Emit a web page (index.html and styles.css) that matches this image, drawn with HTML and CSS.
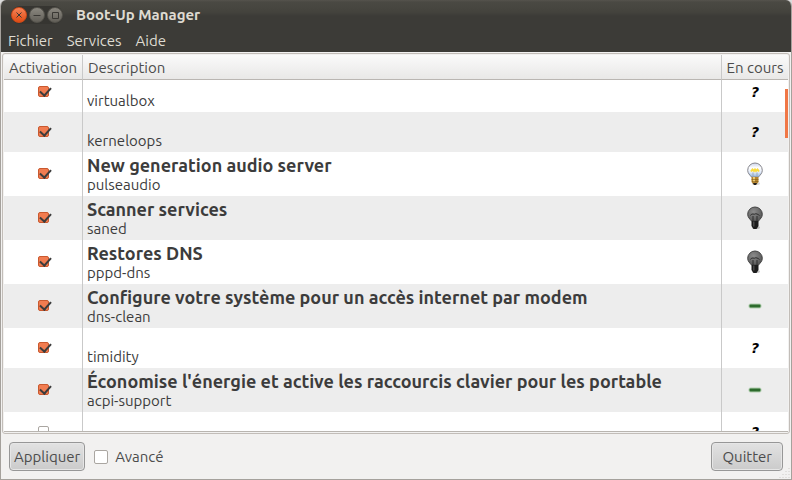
FILE: index.html
```html
<!DOCTYPE html>
<html lang="fr">
<head>
  <meta charset="UTF-8">
  <title>Boot-Up Manager</title>
  <link rel="stylesheet" href="styles.css">
</head>
<body>
  <svg class="defs" width="0" height="0">
    <defs>
      <linearGradient id="glass" x1="0" y1="0" x2="0" y2="1">
        <stop offset="0" stop-color="#c9d2ea"/>
        <stop offset="0.35" stop-color="#ffffff"/>
        <stop offset="0.65" stop-color="#e4ecfa"/>
        <stop offset="1" stop-color="#8db4dc"/>
      </linearGradient>
      <radialGradient id="dark" cx="40%" cy="35%" r="70%">
        <stop offset="0" stop-color="#8c8c8c"/>
        <stop offset="1" stop-color="#555"/>
      </radialGradient>
    </defs>
    <symbol id="bulb-on" viewBox="0 0 18 24">
      <ellipse cx="10" cy="21.5" rx="4" ry="1.5" fill="#000" opacity="0.15"/>
      <path d="M9 1a7.300 7.300 0 0 1 7.300 7.300c0 3-2 4.500-3.800 6.700h-7C3.700 12.800 1.700 11.300 1.700 8.300A7.300 7.300 0 0 1 9 1z" fill="url(#glass)" stroke="#85858c" stroke-width="1"/>
      <path d="M5 9.500l1.500-2 1.500 1.500 1-1.500 1 1.500 1.500-1.500 1.500 2" fill="none" stroke="#fadb3c" stroke-width="2"/>
      <path d="M7 10.500v4M11 10.500v4" stroke="#a0a9b8" stroke-width="1"/>
      <path d="M5.500 15h7v5l-2 2.500h-3l-2-2.500z" fill="#b5842c"/>
      <path d="M7 15h2v5H7z" fill="#ecca70"/>
      <path d="M5.500 17.500h7M6 19.500h6.500" stroke="#805a18" stroke-width="0.600"/>
      <path d="M7 21h4l-1 2H8z" fill="#222"/>
    </symbol>
    <symbol id="bulb-off" viewBox="0 0 18 24">
      <ellipse cx="10" cy="21.500" rx="4" ry="1.500" fill="#000" opacity="0.2"/>
      <path d="M9 1a7.300 7.300 0 0 1 7.300 7.300c0 3-2 4.500-3.800 6.700h-7C3.700 12.800 1.700 11.300 1.700 8.300A7.300 7.300 0 0 1 9 1z" fill="url(#dark)" stroke="#444" stroke-width="1"/>
      <path d="M4.500 9.500q1-2 2.500-1.500t2 0t2 0t2.500 1.500M7 10v5M11 10v5" fill="none" stroke="#2c2c2c" stroke-width="1"/>
      <path d="M5.500 15h7v5l-2 3h-3l-2-3z" fill="#1c1c1c"/>
      <path d="M7 15.500h1.500v5H7z" fill="#484848"/>
    </symbol>
    <symbol id="dash" viewBox="0 0 14 6">
      <rect x="0.500" y="0.500" width="13" height="5" rx="2" fill="#8fbf8c" opacity="0.6"/>
      <rect x="1.500" y="1.500" width="11" height="3" rx="1" fill="#2d6b2d"/>
    </symbol>
  </svg>

  <div class="window">
    <header class="titlebar">
      <div class="window-buttons">
        <button class="wbtn close" aria-label="Fermer">
          <svg viewBox="0 0 14 14"><path d="M4.500 4.500l5 5M9.500 4.500l-5 5"/></svg>
        </button>
        <button class="wbtn" aria-label="Réduire">
          <svg viewBox="0 0 14 14"><path d="M3.500 7.500h7"/></svg>
        </button>
        <button class="wbtn" aria-label="Agrandir">
          <svg viewBox="0 0 14 14"><path d="M4.500 4.500h6v6h-6z"/></svg>
        </button>
      </div>
      <h1>Boot-Up Manager</h1>
    </header>

    <nav class="menubar">
      <a href="#">Fichier</a>
      <a href="#">Services</a>
      <a href="#">Aide</a>
    </nav>

    <main class="content">
      <div class="frame">
        <div class="scroller" id="liste">
          <table>
            <thead>
              <tr><th class="col-active">Activation</th><th>Description</th><th class="col-status">En cours</th></tr>
            </thead>
            <tbody>
              <tr>
                <td><input type="checkbox" aria-label="virtualbox" checked></td>
                <td><div class="name">virtualbox</div></td>
                <td><span class="unknown">?</span></td>
              </tr>
              <tr>
                <td><input type="checkbox" aria-label="kerneloops" checked></td>
                <td><div class="name">kerneloops</div></td>
                <td><span class="unknown">?</span></td>
              </tr>
              <tr class="tall">
                <td><input type="checkbox" aria-label="pulseaudio" checked></td>
                <td><div class="title">New generation audio server</div><div class="name">pulseaudio</div></td>
                <td><svg class="bulb"><use href="#bulb-on"/></svg></td>
              </tr>
              <tr class="tall">
                <td><input type="checkbox" aria-label="saned" checked></td>
                <td><div class="title">Scanner services</div><div class="name">saned</div></td>
                <td><svg class="bulb"><use href="#bulb-off"/></svg></td>
              </tr>
              <tr class="tall">
                <td><input type="checkbox" aria-label="pppd-dns" checked></td>
                <td><div class="title">Restores DNS</div><div class="name">pppd-dns</div></td>
                <td><svg class="bulb"><use href="#bulb-off"/></svg></td>
              </tr>
              <tr class="tall">
                <td><input type="checkbox" aria-label="dns-clean" checked></td>
                <td><div class="title">Configure votre système pour un accès internet par modem</div><div class="name">dns-clean</div></td>
                <td><svg class="dash"><use href="#dash"/></svg></td>
              </tr>
              <tr>
                <td><input type="checkbox" aria-label="timidity" checked></td>
                <td><div class="name">timidity</div></td>
                <td><span class="unknown">?</span></td>
              </tr>
              <tr class="tall">
                <td><input type="checkbox" aria-label="acpi-support" checked></td>
                <td><div class="title">Économise l'énergie et active les raccourcis clavier pour les portable</div><div class="name">acpi-support</div></td>
                <td><svg class="dash"><use href="#dash"/></svg></td>
              </tr>
              <tr>
                <td><input type="checkbox" aria-label="Service"></td>
                <td></td>
                <td><span class="unknown">?</span></td>
              </tr>
            </tbody>
          </table>
        </div>
        <div class="thumb"></div>
      </div>
    </main>

    <footer class="actions">
      <button class="btn">Appliquer</button>
      <label class="advanced"><input type="checkbox"> Avancé</label>
      <button class="btn quit">Quitter</button>
      <svg class="grip" viewBox="0 0 12 12"><path d="M10 1v10M7 4v7M4 7v4M1 10v1"/></svg>
    </footer>
  </div>

  <script>
    document.getElementById("liste").scrollTop = 8;
  </script>
</body>
</html>
```
FILE: styles.css
```css
* {
  box-sizing: border-box;
}
body {
  margin: 0;
  background-color: #dcdcdc;
  font-family: Ubuntu, "Noto Sans", sans-serif;
  font-size: 15px;
  line-height: 18px;
  color: #3c3c3c;
}
.defs {
  position: absolute;
}
.window {
  display: flex;
  flex-direction: column;
  height: 100vh;
  background-color: #f2f1f0;
  border: 1px solid #a5a19c;
  border-top: none;
  border-radius: 6px 6px 0 0;
  overflow: hidden;
}

/* title bar and menu */
.titlebar {
  display: flex;
  align-items: center;
  gap: 13px;
  height: 30px;
  padding: 0 10px;
  background: linear-gradient(#55534d 0, #4a4943 2px, #44433d 12px, #3c3b37 16px);
}
.titlebar h1 {
  margin: 0;
  font-size: 15px;
  color: #dfdbd2;
}
.window-buttons {
  display: flex;
  gap: 2px;
  padding: 1px 0;
  border-radius: 10px;
  background-color: #363531;
}
.wbtn {
  width: 16px;
  height: 16px;
  padding: 0;
  border: 1px solid #55534c;
  border-radius: 50%;
  background: linear-gradient(#8a877f, #625f58);
}
.wbtn svg {
  display: block;
  width: 14px;
  height: 14px;
  fill: none;
  stroke: #3a3834;
  stroke-width: 1;
}
.wbtn.close {
  border-color: #cf4a18;
  background: linear-gradient(#f58358, #df4c14);
}
.menubar {
  display: flex;
  gap: 14px;
  height: 22px;
  padding: 2px 7px;
  background-color: #3c3b37;
}
.menubar a {
  color: #dfdbd2;
  text-decoration: none;
}

/* service list */
.content {
  flex: 1;
  min-height: 0;
  padding: 1px 1px 0;
}
.frame {
  position: relative;
  height: 100%;
  padding: 1px;
  border: 1px solid #c2bdb8;
  border-radius: 3px;
}
.scroller {
  height: 100%;
  overflow-y: auto;
  scrollbar-width: none;
  background-color: #fff;
  border-bottom: 1px solid #b9b5b0;
}
table {
  width: 100%;
  table-layout: fixed;
  border-collapse: separate;
  border-spacing: 0;
}
th {
  position: sticky;
  top: 0;
  z-index: 1;
  height: 25px;
  padding: 2px 5px 0;
  font-weight: normal;
  text-align: left;
  color: #4c4c4c;
  background: linear-gradient(#fafafa, #e9e8e7);
  border-bottom: 1px solid #bab6b2;
}
.col-active {
  width: 78px;
}
.col-status {
  width: 67px;
}
td {
  height: 40px;
  padding: 2px 4px;
}
th + th,
td + td {
  border-left: 1px solid #c9c9c9;
}
.tall td {
  height: 44px;
}
tbody tr:nth-child(even) {
  background-color: #ededed;
}
td:first-child,
td:last-child {
  padding: 0 0 1px;
  text-align: center;
}
.col-active,
.col-status {
  padding: 2px 0 0;
  text-align: center;
}
td:nth-child(2) {
  vertical-align: bottom;
}
.title {
  font-size: 18px;
  line-height: 22px;
  font-weight: bold;
  white-space: nowrap;
}
input[type="checkbox"] {
  appearance: none;
  width: 14px;
  height: 14px;
  margin: 0;
  border: 1px solid #aaa6a1;
  border-radius: 2px;
  background-color: #fff;
}
td input[type="checkbox"] {
  position: relative;
  display: block;
  width: 11px;
  height: 11px;
  margin: 0 auto;
}
td input[type="checkbox"]:checked {
  border-color: #c9592f;
  background-color: #f17c50;
}
td input[type="checkbox"]:checked::after {
  content: "";
  position: absolute;
  left: 3px;
  top: -2px;
  width: 5px;
  height: 9px;
  border: solid #3c3c3c;
  border-width: 0 2px 2px 0;
  transform: rotate(42deg);
}
.unknown {
  font-family: "DejaVu Sans", sans-serif;
  font-size: 14px;
  font-weight: bold;
  font-style: italic;
  color: #000;
}
.bulb {
  display: block;
  width: 18px;
  height: 24px;
  margin: 0 auto;
}
.dash {
  display: block;
  width: 14px;
  height: 6px;
  margin: 0 auto;
}
.thumb {
  position: absolute;
  top: 35px;
  right: 1px;
  width: 3px;
  height: 49px;
  background-color: #f07746;
}

/* bottom bar */
.actions {
  position: relative;
  display: flex;
  align-items: center;
  gap: 9px;
  height: 45px;
  padding: 0 8px;
}
.btn {
  height: 29px;
  padding: 0 4px;
  font: inherit;
  color: #4c4c4c;
  border: 1px solid #979797;
  border-radius: 4px;
  background: linear-gradient(#e2e2e2, #cbcbcb);
  box-shadow: inset 0 0 0 1px #e6e6e6;
}
.quit {
  margin-left: auto;
  padding: 0 10px;
}
.advanced {
  display: flex;
  align-items: center;
  gap: 7px;
  color: #4c4c4c;
}
.grip {
  position: absolute;
  right: 0;
  bottom: 0;
  width: 12px;
  height: 12px;
  fill: none;
  stroke: #cfccc8;
  stroke-dasharray: 1 2;
}
```
